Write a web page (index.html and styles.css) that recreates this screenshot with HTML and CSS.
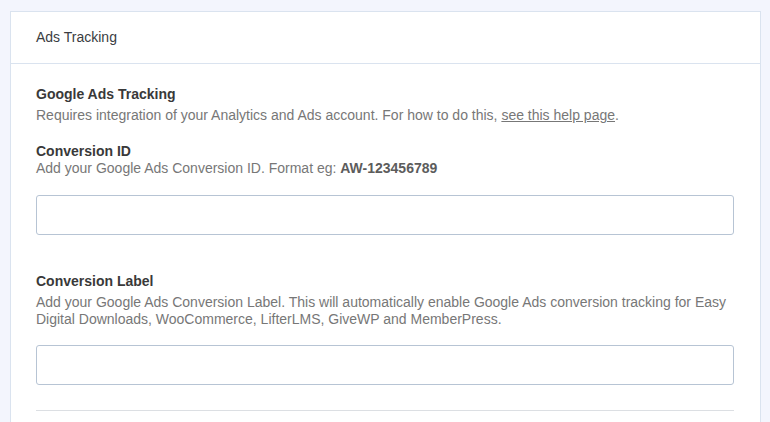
FILE: index.html
```html
<!DOCTYPE html>
<html>
<head>
<meta charset="utf-8">
<link rel="stylesheet" href="styles.css">
</head>
<body>
<div class="card">
  <div class="card-header">Ads Tracking</div>
  <div class="card-body">
    <div class="group">
      <div class="label">Google Ads Tracking</div>
      <div class="desc desc-spaced">Requires integration of your Analytics and Ads account. For how to do this, <a href="#" class="link">see this help page</a>.</div>
    </div>
    <div class="group group-id">
      <div class="label">Conversion ID</div>
      <div class="desc">Add your Google Ads Conversion ID. Format eg: <strong>AW-123456789</strong></div>
      <input class="field" type="text">
    </div>
    <div class="group group-label">
      <div class="label">Conversion Label</div>
      <div class="desc desc-spaced">Add your Google Ads Conversion Label. This will automatically enable Google Ads conversion tracking for Easy Digital Downloads, WooCommerce, LifterLMS, GiveWP and MemberPress.</div>
      <input class="field" type="text">
    </div>
    <div class="divider"></div>
  </div>
</div>
</body>
</html>
```
FILE: styles.css
```css
html, body {
  margin: 0;
  padding: 0;
}
body {
  background: #f3f5fd;
  font-family: "Liberation Sans", Arial, sans-serif;
  font-size: 14px;
  line-height: 17.4px;
  color: #777777;
  padding: 11px 9px 0 10px;
  height: 422px;
  overflow: hidden;
  box-sizing: border-box;
}
.card {
  background: #ffffff;
  border: 1px solid #dae3ef;
  border-bottom: none;
  min-height: 500px;
}
.card-header {
  height: 52px;
  box-sizing: border-box;
  padding: 1px 25px 0 25px;
  display: flex;
  align-items: center;
  border-bottom: 1px solid #dae3ef;
  color: #3a3d42;
  font-size: 14px;
}
.card-body {
  padding: 22px 26px 0 25px;
}
.label {
  font-weight: bold;
  color: #393939;
}
.desc {
  color: #777777;
}
.desc-spaced {
  margin-top: 3.5px;
}
.desc strong {
  color: #5c5c5c;
}
.link {
  color: #777777;
  text-decoration: underline;
}
.group-id {
  margin-top: 18.5px;
}
.group-label {
  margin-top: 38px;
}
.field {
  display: block;
  box-sizing: border-box;
  width: 100%;
  height: 40px;
  margin: 17.5px 0 0 0;
  border: 1px solid #b7c4d4;
  border-radius: 3px;
  background: #fff;
  padding: 0 10px;
  font-family: inherit;
  font-size: 14px;
}
.group-label .field {
  margin-top: 16px;
}
.divider {
  margin-top: 25px;
  height: 1px;
  background: #dcdfe3;
}
```
